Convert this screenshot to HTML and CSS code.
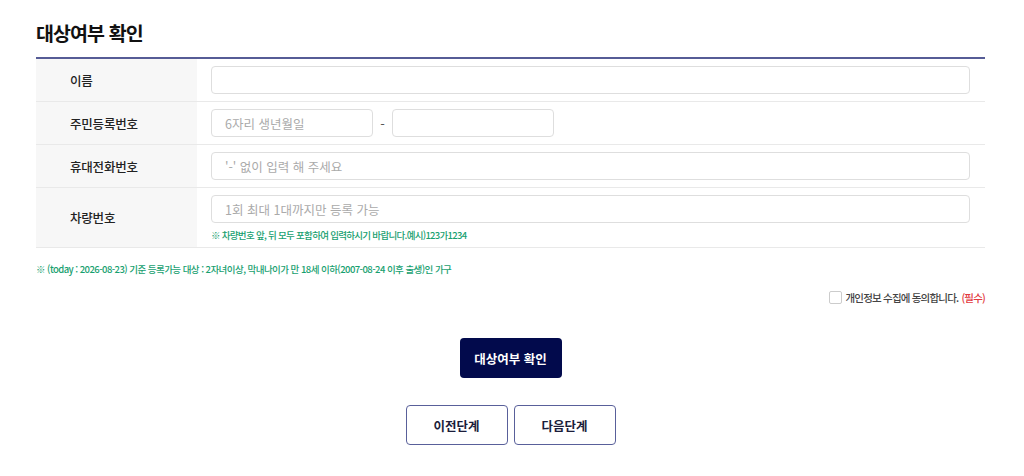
FILE: index.html
```html
<!DOCTYPE html>
<html lang="ko">
<head>
    <meta charset="UTF-8">
    <meta name="viewport" content="width=device-width, initial-scale=1.0">
    <title>대상여부 확인</title>
    <link rel="stylesheet" href="styles.css">
</head>
<body>
    <div class="check-container">
        <h2 class="title">대상여부 확인</h2>

        <div class="form-table">
            <div class="row">
                <div class="label">이름</div>
                <div class="field">
                    <input type="text" class="inp inp-full" value="">
                </div>
            </div>
            <div class="row">
                <div class="label">주민등록번호</div>
                <div class="field field-jumin">
                    <input type="text" class="inp inp-half" placeholder="6자리 생년월일">
                    <span class="dash">-</span>
                    <input type="text" class="inp inp-half" value="">
                </div>
            </div>
            <div class="row">
                <div class="label">휴대전화번호</div>
                <div class="field">
                    <input type="text" class="inp inp-full" placeholder="'-' 없이 입력 해 주세요">
                </div>
            </div>
            <div class="row row-car">
                <div class="label">차량번호</div>
                <div class="field">
                    <input type="text" class="inp inp-full" placeholder="1회 최대 1대까지만 등록 가능">
                    <p class="hint">※ 차량번호 앞, 뒤 모두 포함하여 입력하시기 바랍니다.예시)123가1234</p>
                </div>
            </div>
        </div>

        <p class="notice">※ (today : 2026-08-23) 기준 등록가능 대상 : 2자녀이상, 막내나이가 만 18세 이하(2007-08-24 이후 출생)인 가구</p>

        <div class="agree">
            <label><input type="checkbox" class="chk"> 개인정보 수집에 동의합니다. <span class="req">(필수)</span></label>
        </div>

        <div class="btn-center">
            <button type="button" class="btn-check">대상여부 확인</button>
        </div>

        <div class="btn-steps">
            <button type="button" class="btn-step">이전단계</button>
            <button type="button" class="btn-step">다음단계</button>
        </div>
    </div>
</body>
</html>
```

FILE: styles.css
```css
*{
    margin: 0;
    padding: 0;
    box-sizing: border-box;
}
body{
    font-family: "Noto Sans CJK KR", "Noto Sans", sans-serif;
    color: #222;
    background: #fff;
}
.check-container{
    width: 949px;
    margin-left: 36px;
    padding-top: 19px;
}

.title{
    font-size: 19.5px;
    line-height: 28px;
    font-weight: 700;
    color: #111;
    margin-bottom: 10px;
    letter-spacing: -0.9px;
}

.form-table{
    border-top: 2px solid #565c96;
}
.row{
    display: flex;
    border-bottom: 1px solid #e9e9e9;
}
.label{
    width: 161px;
    flex-shrink: 0;
    background-color: #f7f7f7;
    padding-left: 34px;
    display: flex;
    align-items: center;
    font-size: 12.5px;
    font-weight: 500;
    color: #222;
    letter-spacing: -0.2px;
}
.field{
    flex: 1;
    padding: 7px 15px 7px 14px;
}
.field-jumin{
    display: flex;
    align-items: center;
}
.inp{
    height: 28px;
    border: 1px solid #dedede;
    border-radius: 4px;
    padding: 0 13px;
    font-family: inherit;
    font-size: 12.5px;
    color: #333;
    outline: none;
}
.inp::placeholder{
    color: #aaa;
}
.inp-full{
    display: block;
    width: 100%;
}
.inp-half{
    width: 162px;
}
.dash{
    width: 19px;
    text-align: center;
    font-size: 13px;
    color: #555;
}

.row-car .field{
    padding-bottom: 5px;
}
.hint{
    margin-top: 5px;
    font-size: 9.5px;
    line-height: 14px;
    font-weight: 500;
    color: #17a06f;
    letter-spacing: -0.7px;
}

.notice{
    margin-top: 14px;
    font-size: 9.5px;
    line-height: 14px;
    font-weight: 500;
    color: #17a06f;
    letter-spacing: -0.55px;
}

.agree{
    margin-top: 14px;
    text-align: right;
    font-size: 10.5px;
    font-weight: 500;
    color: #444;
    letter-spacing: -0.8px;
}
.agree label{
    display: inline-flex;
    align-items: center;
}
.chk{
    appearance: none;
    width: 13px;
    height: 13px;
    border: 1px solid #ccc;
    border-radius: 2px;
    background: #fff;
    margin-right: 3px;
}
.req{
    color: #e2383d;
    margin-left: 3px;
}

.btn-center{
    display: flex;
    justify-content: center;
    margin-top: 31px;
}
.btn-check{
    width: 102px;
    height: 40px;
    border: none;
    border-radius: 4px;
    background-color: #020a4c;
    color: #fff;
    font-family: inherit;
    font-size: 12.5px;
    font-weight: 700;
}

.btn-steps{
    display: flex;
    justify-content: center;
    gap: 6px;
    margin-top: 27px;
}
.btn-step{
    width: 102px;
    height: 40px;
    border: 1px solid #59609a;
    border-radius: 4px;
    background-color: #fff;
    color: #1b1d3a;
    font-family: inherit;
    font-size: 12.5px;
    font-weight: 700;
}
```
